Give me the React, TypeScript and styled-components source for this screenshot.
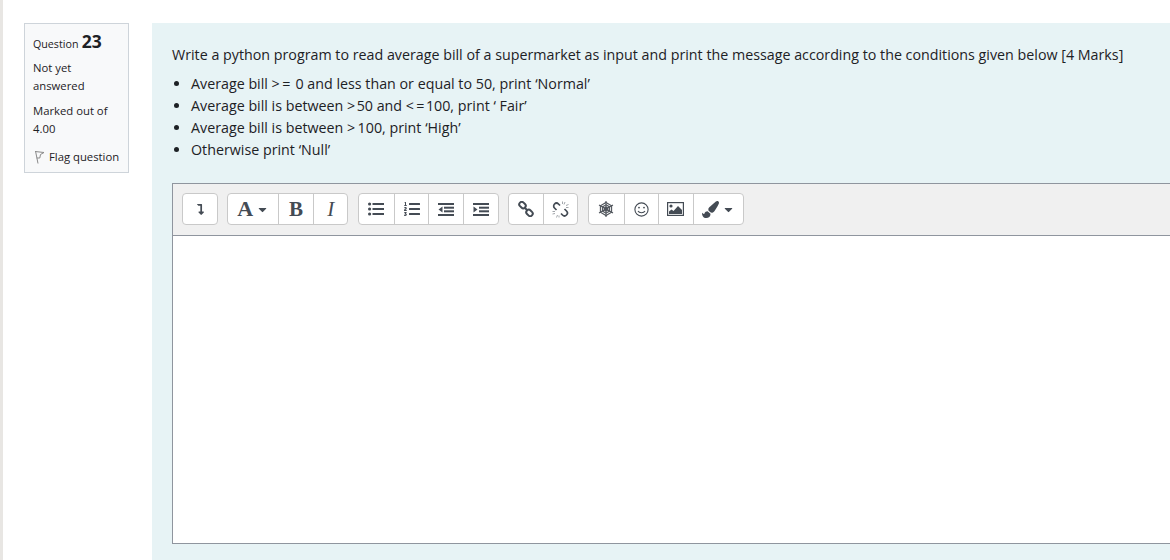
import React from 'react';
import styled, { createGlobalStyle } from 'styled-components';
import { FaLevelDownAlt, FaListOl, FaPaintBrush, FaCaretDown } from 'react-icons/fa';

const Global = createGlobalStyle`
  html, body { margin: 0; padding: 0; background: #fff; overflow: hidden; }
  body { font-family: "Open Sans", "Noto Sans", sans-serif; color: #1d2125; }
`;
const Page = styled.div`
  display: flex; width: 1170px; height: 560px; overflow: hidden; box-sizing: border-box;
  border-left: 3px solid #e8e6e3; padding: 23px 0 0 21px; gap: 23px;
`;
const Info = styled.aside`
  flex: 0 0 105px; height: 150px; box-sizing: border-box; background: #f8f9fa; border: 1px solid #ced4da;
  padding: 6px 8px; font-size: 11.3px; line-height: 18px;
`;
const QuestionNo = styled.h3`
  margin: 0 0 4px; font-weight: 400; font-size: 10.7px; line-height: 22px;
  b { font-size: 17.5px; font-weight: 700; margin-left: 0.5px; }
`;
const InfoText = styled.div`margin-bottom: 7px;`;
const Flag = styled.div`display: flex; align-items: center; gap: 4px; margin-top: 10px; white-space: nowrap; margin-left: 1px;`;
const Content = styled.main`
  flex: 0 0 1018px; background: #e7f3f5; padding: 21px 0 0 20px; box-sizing: border-box; height: 537px;
`;
const Prompt = styled.p`margin: 0 0 7px; font-size: 14.27px; line-height: 22px; white-space: nowrap;`;
const Bullets = styled.ul`margin: 0 0 22px; padding: 0 0 0 19px; font-size: 14.27px; line-height: 22px;`;
const Editor = styled.div`width: 1010px; height: 361px; display: flex; flex-direction: column; border: 1px solid #8f959e; box-sizing: border-box; background: #fff;`;
const Toolbar = styled.div`
  flex: 0 0 52px; display: flex; align-items: flex-start; gap: 9.7px; box-sizing: border-box;
  padding: 9px 0 0 9.3px; background: #f0f0f0; border-bottom: 1px solid #8f959e;
`;
const Group = styled.div`display: flex; height: 32px; box-sizing: border-box; border: 1px solid #c9c9c9; border-radius: 4px; background: #fff;`;
const Btn = styled.div<{ $w?: number }>`
  width: ${p => p.$w ?? 34.6}px; display: flex; align-items: center; justify-content: center; gap: 3px;
  color: #444b54; box-sizing: border-box; font-size: 14px;
  & + & { border-left: 1px solid #c9c9c9; }
`;
const Serif = styled.span<{ $i?: boolean; $size?: number }>`
  font-family: "Liberation Serif", serif; font-weight: ${p => p.$i ? 400 : 700}; font-style: ${p => p.$i ? 'italic' : 'normal'};
  font-size: ${p => p.$size ?? 21}px; line-height: 1; color: #444b54;
`;
const C = '#444b54';
const ListUl = () => (
  <svg width="16" height="14" viewBox="0 0 16 14" fill={C}>
    <circle cx="1.6" cy="2" r="1.6" /><circle cx="1.6" cy="7" r="1.6" /><circle cx="1.6" cy="12" r="1.6" />
    <rect x="4.5" y="1" width="11.5" height="2" /><rect x="4.5" y="6" width="11.5" height="2" /><rect x="4.5" y="11" width="11.5" height="2" />
  </svg>
);
const Outdent = () => (
  <svg width="16" height="13" viewBox="0 0 16 13" fill={C}>
    <rect y="0" width="16" height="2" /><rect x="6" y="3.7" width="10" height="2" /><rect x="6" y="7.3" width="10" height="2" /><rect y="11" width="16" height="2" />
    <path d="M4.5 3.5V9.5L0.5 6.5Z" />
  </svg>
);
const Indent = () => (
  <svg width="16" height="13" viewBox="0 0 16 13" fill={C}>
    <rect y="0" width="16" height="2" /><rect x="6" y="3.7" width="10" height="2" /><rect x="6" y="7.3" width="10" height="2" /><rect y="11" width="16" height="2" />
    <path d="M0.5 3.5V9.5L4.5 6.5Z" />
  </svg>
);
const LinkIcon = () => (
  <svg width="16" height="16" viewBox="0 0 16 16" fill="none" stroke={C} strokeWidth="2">
    <rect x="1" y="1.6" width="7" height="5" rx="2.5" transform="rotate(45 4.5 4.1)" />
    <rect x="8" y="9.4" width="7" height="5" rx="2.5" transform="rotate(45 11.5 11.9)" />
    <path d="M6.5 6.5L9.5 9.5" />
  </svg>
);
const Unlink = () => (
  <svg width="17" height="17" viewBox="0 0 17 17" fill="none" stroke={C} strokeWidth="1.7">
    <path d="M8 4.5L6.5 3A2.8 2.8 0 0 0 2.5 7L4.5 9" />
    <path d="M9 12.5L10.5 14A2.8 2.8 0 0 0 14.5 10L12.5 8" />
    <path d="M10.5 0.5V3M13 1L12 3.5M16.5 3.5L14 4.5M16.5 6.5H14M0.5 10.5H3M0.5 13L3 12.5M4.5 16.5L5.5 14M7 16.5V14.5" strokeWidth="0.8" stroke="#8a8f96" />
  </svg>
);
const Web = () => (
  <svg width="16" height="16" viewBox="0 0 16 16" fill="none" stroke="#50555c" strokeWidth="1.1">
    <path d="M8 0V16M1 4L15 12M15 4L1 12" />
    <path d="M8 1.5L13.6 4.7V11.3L8 14.5L2.4 11.3V4.7Z" />
    <path d="M8 3.8L11.6 5.9V10.1L8 12.2L4.4 10.1V5.9Z" />
    <path d="M8 6L9.8 7V9L8 10L6.2 9V7Z" fill="#50555c" />
  </svg>
);
const Smile = () => (
  <svg width="15" height="15" viewBox="0 0 15 15" fill="none" stroke={C} strokeWidth="1.1">
    <circle cx="7.5" cy="7.5" r="6.6" />
    <circle cx="5" cy="5.6" r="0.9" fill={C} stroke="none" /><circle cx="10" cy="5.6" r="0.9" fill={C} stroke="none" />
    <path d="M4 9C5.2 11.4 9.8 11.4 11 9" />
  </svg>
);
const Picture = () => (
  <svg width="17" height="14" viewBox="0 0 17 14">
    <rect x="0.6" y="0.6" width="15.8" height="12.8" fill="#fff" stroke={C} strokeWidth="1.2" />
    <circle cx="4" cy="4" r="1.6" fill={C} />
    <path d="M2 12V9.5L4.5 7.5L6.5 9L11 4L15 8V12Z" fill={C} />
  </svg>
);
const FlagIcon = () => (
  <svg width="11" height="14" viewBox="0 0 11 14" fill="none" stroke="#8a8a8a" strokeWidth="1">
    <path d="M1.5 1L4 13.5M1.2 1.5L10 2.5L6.5 4.5L5.8 8L2.7 8" />
  </svg>
);

export default function App() {
  return (
    <Page>
      <Global />
      <Info>
        <QuestionNo>Question <b>23</b></QuestionNo>
        <InfoText>Not yet answered</InfoText>
        <InfoText>Marked out of 4.00</InfoText>
        <Flag><FlagIcon />Flag question</Flag>
      </Info>
      <Content>
        <Prompt>Write a python program to read average bill of a supermarket as input and print the message according to the conditions given below [4 Marks]</Prompt>
        <Bullets>
          <li>Average bill &gt;&#8201;= &#8202;0 and less than or equal to 50, print ‘Normal’</li>
          <li>Average bill is between &gt;&#8202;50 and &lt;&#8201;=&#8202;100, print ‘ Fair’</li>
          <li>Average bill is between &gt;&#8201;100, print ‘High’</li>
          <li>Otherwise print ‘Null’</li>
        </Bullets>
        <Editor>
          <Toolbar>
            <Group><Btn $w={33.5}><FaLevelDownAlt size={11} /></Btn></Group>
            <Group>
              <Btn $w={49.5}><Serif $size={22}>A</Serif><FaCaretDown size={13} /></Btn>
              <Btn $w={35}><Serif>B</Serif></Btn>
              <Btn $w={34.5}><Serif $i>I</Serif></Btn>
            </Group>
            <Group>
              <Btn><ListUl /></Btn>
              <Btn><FaListOl size={16} /></Btn>
              <Btn><Outdent /></Btn>
              <Btn><Indent /></Btn>
            </Group>
            <Group>
              <Btn $w={34}><LinkIcon /></Btn>
              <Btn $w={34}><Unlink /></Btn>
            </Group>
            <Group>
              <Btn><Web /></Btn>
              <Btn><Smile /></Btn>
              <Btn><Picture /></Btn>
              <Btn $w={50.2}><FaPaintBrush size={17} /><FaCaretDown size={13} /></Btn>
            </Group>
          </Toolbar>
        </Editor>
      </Content>
    </Page>
  );
}
